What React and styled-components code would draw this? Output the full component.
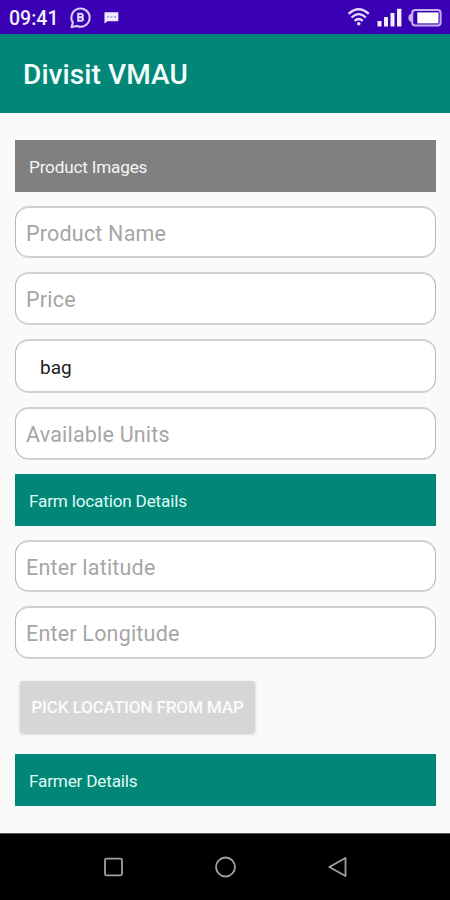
import React from "react";
import styled, { createGlobalStyle } from "styled-components";

const GlobalStyle = createGlobalStyle`
  * {
    box-sizing: border-box;
  }
  body {
    margin: 0;
    background-color: #fafafa;
    font-family: Roboto, sans-serif;
  }
`;

const Container = styled.div`
  width: 450px;
  height: 900px;
  display: flex;
  flex-direction: column;
  background-color: #fafafa;
  overflow: hidden;
`;
const StatusBar = styled.div`
  height: 34px;
  flex-shrink: 0;
  display: flex;
  align-items: center;
  background-color: #3a00b3;
`;
const Time = styled.span`
  width: 62px;
  padding-left: 9px;
  padding-top: 3px;
  color: #f3effb;
  font-size: 19.5px;
  font-weight: 500;
  line-height: 24px;
  white-space: nowrap;
`;
const StatusIcons = styled.svg`
  display: block;
  margin-left: ${(props) => props.$push || "0"};
`;
const AppBar = styled.div`
  height: 79px;
  flex-shrink: 0;
  display: flex;
  align-items: center;
  padding: 2px 0 0 23px;
  background-color: #028677;
`;
const Title = styled.h1`
  margin: 0;
  color: #f4fffd;
  font-size: 28px;
  font-weight: 500;
  line-height: 32px;
  letter-spacing: 0.1px;
`;
const Form = styled.div`
  flex: 1;
  display: flex;
  flex-direction: column;
  gap: 14px;
  padding: 27px 14px 0 15px;
`;
const SectionHeader = styled.div`
  height: 52px;
  flex-shrink: 0;
  display: flex;
  align-items: center;
  padding: 2px 14px 0;
  color: ${(props) => (props.$muted ? "#f4f4f4" : "#dffaf5")};
  font-size: 17.2px;
  letter-spacing: -0.2px;
  background-color: ${(props) => (props.$muted ? "#808080" : "#028677")};
`;
const Field = styled.div`
  height: ${(props) => props.$height || 53}px;
  flex-shrink: 0;
  border-style: solid;
  border-width: 2px 1px;
  border-color: #d0d0d0 #b8b8b8;
  border-radius: 14px;
  background-color: #fff;
  display: flex;
`;
const Input = styled.input`
  width: 100%;
  padding: 2px 10px 0;
  border: none;
  outline: none;
  background: transparent;
  font-family: inherit;
  font-size: 21.5px;
  letter-spacing: 0.2px;
  &::placeholder {
    color: #a6a6a6;
    opacity: 1;
  }
`;
const UnitValue = styled.span`
  align-self: center;
  padding: 3px 0 0 24px;
  color: #222;
  font-size: 19px;
`;
const PickButton = styled.button`
  align-self: flex-start;
  width: 235px;
  height: 52px;
  flex-shrink: 0;
  margin: 8px 0 7px 5px;
  padding: 0;
  border: none;
  border-radius: 3px;
  background-color: #d5d7d6;
  box-shadow: 0 1px 3px rgba(0, 0, 0, 0.22);
  color: #fbfbfb;
  font-family: inherit;
  font-size: 17.2px;
  font-weight: 500;
  letter-spacing: -0.2px;
  white-space: nowrap;
`;
const NavBar = styled.div`
  height: 67px;
  flex-shrink: 0;
  display: flex;
  align-items: center;
  justify-content: space-between;
  padding: 0 100px 0 101px;
  background-color: #000;
  border-top: 1px solid #555;
`;
const NavIcon = styled.svg`
  fill: none;
  stroke: #a0a0a0;
  stroke-width: 1.8;
  stroke-linejoin: round;
`;

const Status = () => (
  <StatusBar>
    <Time>09:41</Time>
    <StatusIcons width="64" height="34" viewBox="62 0 64 34">
      <path
        d="M72.9 22.6A9.1 9.1 0 1 1 77 26L71.6 27Z"
        fill="none"
        stroke="#d9ccf5"
        strokeWidth="2.1"
        strokeLinejoin="round"
      />
      <path
        d="M78.2 13.8V20.8H81.2A1.8 1.8 0 0 0 81.2 17.2A1.7 1.7 0 0 0 81 13.8H77.2M77.2 20.8H79M78.2 17.3H81.2"
        fill="none"
        stroke="#e6dcfa"
        strokeWidth="2"
      />
      <path d="M104.5 12.3H118.3V21.2H107.5L104.5 23.4Z" fill="#efe9fb" />
      <path
        d="M107 16.8H109M110.5 16.8H112.5M114 16.8H116"
        stroke="#9b82d8"
        strokeWidth="1.2"
      />
    </StatusIcons>
    <StatusIcons $push="auto" width="104" height="34" viewBox="346 0 104 34">
      <g fill="none" stroke="#e2d8f7" strokeWidth="2.3">
        <path d="M348.6 13.9Q358.6 4.6 368.8 13.9" />
        <path d="M351.6 17.5Q358.6 10.7 365.8 17.5" />
        <path d="M354.6 20.9Q358.6 17 362.7 20.9" />
      </g>
      <circle cx="358.7" cy="23.8" r="1.8" fill="#e2d8f7" />
      <g fill="#f3effb">
        <rect x="377.5" y="21" width="4" height="5.6" rx="0.6" />
        <rect x="384" y="17" width="4" height="9.6" rx="0.6" />
        <rect x="390.5" y="13" width="4" height="13.6" rx="0.6" />
        <rect x="397" y="8.7" width="4.4" height="17.9" rx="0.6" />
      </g>
      <rect
        x="412.2"
        y="10.1"
        width="28.4"
        height="15.5"
        rx="3"
        fill="none"
        stroke="#c6b3ee"
        strokeWidth="2"
      />
      <path d="M411.8 13.6Q408.4 14 408.4 17.8Q408.4 21.7 411.8 22Z" fill="#c6b3ee" />
      <rect x="417.3" y="12.4" width="21.2" height="11" fill="#fff" />
    </StatusIcons>
  </StatusBar>
);

const TextField = ({ label, height }) => (
  <Field $height={height}>
    <Input placeholder={label} />
  </Field>
);

const App = () => {
  return (
    <Container>
      <GlobalStyle />
      <Status />
      <AppBar>
        <Title>Divisit VMAU</Title>
      </AppBar>
      <Form>
        <SectionHeader $muted>Product Images</SectionHeader>
        <TextField label="Product Name" height={52} />
        <TextField label="Price" />
        <Field $height={54}>
          <UnitValue>bag</UnitValue>
        </Field>
        <TextField label="Available Units" />
        <SectionHeader>Farm location Details</SectionHeader>
        <TextField label="Enter latitude" height={52} />
        <TextField label="Enter Longitude" />
        <PickButton>PICK LOCATION FROM MAP</PickButton>
        <SectionHeader>Farmer Details</SectionHeader>
      </Form>
      <NavBar>
        <NavIcon width="24" height="24" viewBox="0 0 24 24">
          <rect x="4" y="3.7" width="17" height="16.6" rx="1.5" />
        </NavIcon>
        <NavIcon width="24" height="24" viewBox="0 0 24 24">
          <circle cx="11.5" cy="12" r="9.5" />
        </NavIcon>
        <NavIcon width="24" height="24" viewBox="0 0 24 24">
          <path d="M19.5 3V21L3.3 12Z" />
        </NavIcon>
      </NavBar>
    </Container>
  );
};

export default App;
